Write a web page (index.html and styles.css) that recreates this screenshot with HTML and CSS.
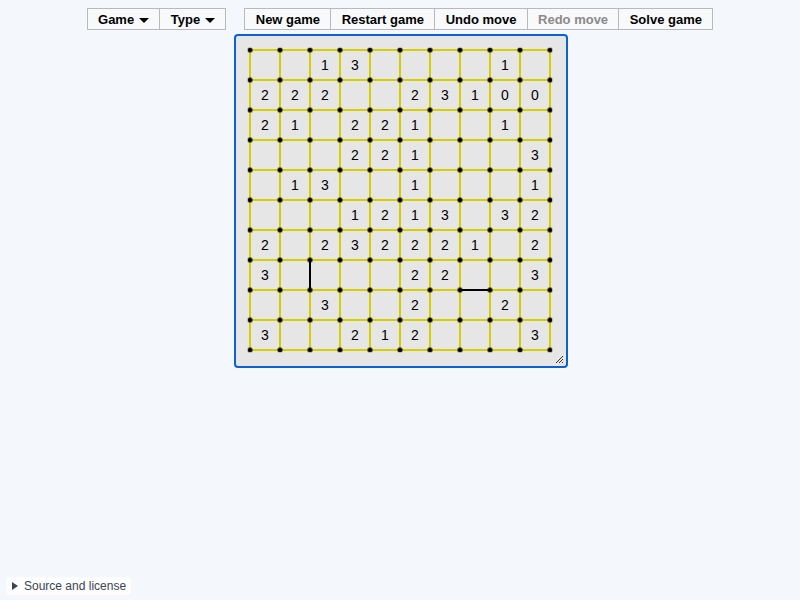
FILE: index.html
```html
<!DOCTYPE html>
<html lang="en">
<head>
<meta charset="utf-8">
<title>Loopy</title>
<link rel="stylesheet" href="styles.css">
</head>
<body>
<div class="page">
  <div class="toolbar">
    <div class="group">
      <button class="btn">Game <span class="caret"></span></button>
      <button class="btn">Type <span class="caret"></span></button>
    </div>
    <div class="group">
      <button class="btn">New game</button>
      <button class="btn">Restart game</button>
      <button class="btn">Undo move</button>
      <button class="btn disabled">Redo move</button>
      <button class="btn">Solve game</button>
    </div>
  </div>
  <div class="board">
    <svg class="puzzle" width="330" height="330" viewBox="236 36 330 330">
      <defs>
        <pattern id="dots" x="247.5" y="47.5" width="30" height="30" patternUnits="userSpaceOnUse">
          <circle cx="2.5" cy="2.5" r="2.5" fill="#000"/>
        </pattern>
      </defs>
      <path class="grid" d="M250 50H550M250 80H550M250 110H550M250 140H550M250 170H550M250 200H550M250 230H550M250 260H550M250 290H550M250 320H550M250 350H550M250 50V350M280 50V350M310 50V350M340 50V350M370 50V350M400 50V350M430 50V350M460 50V350M490 50V350M520 50V350M550 50V350"/>
      <path class="line" d="M310 260V290M460 290H490"/>
      <rect x="247.5" y="47.5" width="305" height="305" fill="url(#dots)"/>
      <g class="nums">
        <text x="325" y="65">1</text><text x="355" y="65">3</text><text x="505" y="65">1</text>
        <text x="265" y="95">2</text><text x="295" y="95">2</text><text x="325" y="95">2</text><text x="415" y="95">2</text><text x="445" y="95">3</text><text x="475" y="95">1</text><text x="505" y="95">0</text><text x="535" y="95">0</text>
        <text x="265" y="125">2</text><text x="295" y="125">1</text><text x="355" y="125">2</text><text x="385" y="125">2</text><text x="415" y="125">1</text><text x="505" y="125">1</text>
        <text x="355" y="155">2</text><text x="385" y="155">2</text><text x="415" y="155">1</text><text x="535" y="155">3</text>
        <text x="295" y="185">1</text><text x="325" y="185">3</text><text x="415" y="185">1</text><text x="535" y="185">1</text>
        <text x="355" y="215">1</text><text x="385" y="215">2</text><text x="415" y="215">1</text><text x="445" y="215">3</text><text x="505" y="215">3</text><text x="535" y="215">2</text>
        <text x="265" y="245">2</text><text x="325" y="245">2</text><text x="355" y="245">3</text><text x="385" y="245">2</text><text x="415" y="245">2</text><text x="445" y="245">2</text><text x="475" y="245">1</text><text x="535" y="245">2</text>
        <text x="265" y="275">3</text><text x="415" y="275">2</text><text x="445" y="275">2</text><text x="535" y="275">3</text>
        <text x="325" y="305">3</text><text x="415" y="305">2</text><text x="505" y="305">2</text>
        <text x="265" y="335">3</text><text x="355" y="335">2</text><text x="385" y="335">1</text><text x="415" y="335">2</text><text x="535" y="335">3</text>
      </g>
      <path class="grip" d="M563 356L556 363M563 359L559 363M563 362L562 363"/>
    </svg>
  </div>
  <div class="footer">
    <div class="details"><span class="tri"></span>Source and license</div>
  </div>
</div>
</body>
</html>
```
FILE: styles.css
```css
html, body {
  margin: 0;
  padding: 0;
  background: #f4f7fb;
}
body {
  font-family: "Liberation Sans", Arial, sans-serif;
}
.page {
  height: 600px;
  display: flex;
  flex-direction: column;
  align-items: center;
}
.toolbar {
  margin-top: 8px;
  display: flex;
  gap: 18px;
}
.group {
  display: flex;
  border: 1px solid #b9b9b9;
  background: #f8f9fb;
}
.btn {
  height: 20px;
  padding: 0 10.3px;
  margin: 0;
  border: none;
  border-left: 1px solid #b9b9b9;
  background: transparent;
  font-family: "Liberation Sans", Arial, sans-serif;
  font-weight: bold;
  font-size: 13px;
  color: #000;
  display: flex;
  align-items: center;
  gap: 5px;
}
.btn:first-child {
  border-left: none;
}
.btn.disabled {
  color: #8a8a8a;
}
.caret {
  width: 0;
  height: 0;
  border-left: 5px solid transparent;
  border-right: 5px solid transparent;
  border-top: 5px solid #000;
  margin-top: 2px;
}
.board {
  margin-top: 4px;
  margin-left: 2px;
  width: 330px;
  height: 330px;
  border: 2px solid #0b62d0;
  border-radius: 4px;
  background: #e6e6e6;
  display: flex;
}
.puzzle {
  display: block;
}
.grid {
  fill: none;
  stroke: #d6cf00;
  stroke-width: 2;
}
.line {
  fill: none;
  stroke: #000;
  stroke-width: 2;
}
.grip {
  fill: none;
  stroke: #333;
  stroke-width: 1;
}
.nums text {
  font-family: "Liberation Sans", Arial, sans-serif;
  font-size: 14px;
  fill: #000;
  text-anchor: middle;
  dominant-baseline: central;
}
.footer {
  margin-top: auto;
  align-self: flex-start;
  padding: 0 0 5px 6px;
}
.details {
  display: flex;
  align-items: center;
  gap: 6px;
  height: 18px;
  padding: 0 5px 0 6px;
  background: #fdfdfe;
  border-radius: 4px;
  font-size: 12px;
  color: #3b4452;
}
.tri {
  width: 0;
  height: 0;
  border-top: 4px solid transparent;
  border-bottom: 4px solid transparent;
  border-left: 6px solid #3b4452;
}
```
